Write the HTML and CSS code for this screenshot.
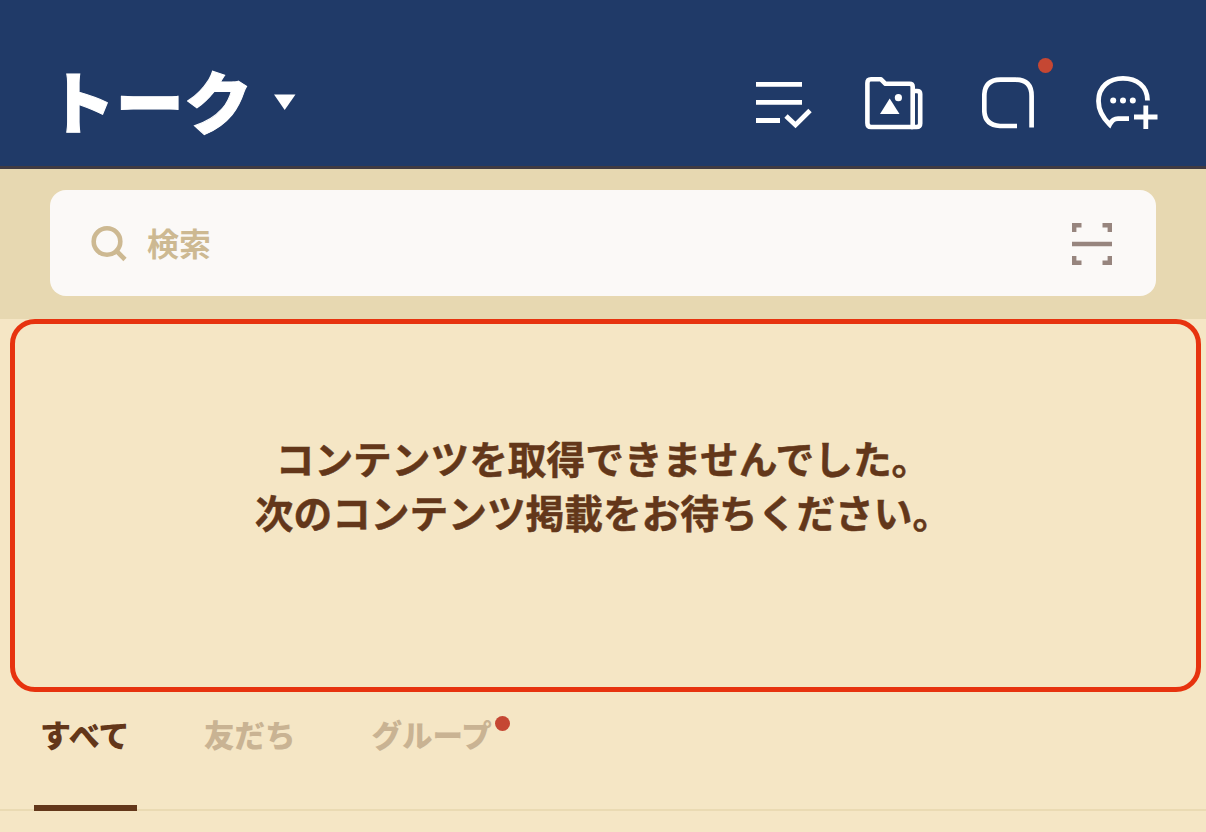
FILE: index.html
```
<!DOCTYPE html>
<html lang="ja">
<head>
  <meta charset="UTF-8" />
  <title>トーク</title>
  <link rel="stylesheet" href="styles.css">
</head>
<body>
  <header class="header">
    <h1 class="title">トーク</h1>
    <svg class="caret" width="22" height="16" viewBox="0 0 22 16"><path d="M0 0.5H21.5L10.700 16Z" fill="#fff"/></svg>

    <div class="header-icons">
      <svg width="56" height="56" viewBox="0 0 56 56" fill="none" stroke="#fff" stroke-width="4.8">
        <path d="M0 10.3H46M0 28.3H46M0 46.5H24"/>
        <path d="M30 42L39.500 51L54 36.5" stroke-width="4.8"/>
      </svg>
      <svg width="58" height="56" viewBox="0 0 58 56" fill="none" stroke="#fff" stroke-width="4.6">
        <path d="M6 5.300H16L20.500 9.800H44.500Q47.700 9.800 47.700 12.800V53H6Q2.400 53 2.400 49V9Q2.400 5.300 6 5.300Z" stroke-linejoin="round"/>
        <path d="M48 17H52Q55.200 17 55.200 20V49.500Q55.200 53 51.500 53H46"/>
        <path d="M15 40L24.700 24.500L34.500 40Z" fill="#fff" stroke="none"/>
        <circle cx="33.400" cy="23.700" r="3.600" fill="#fff" stroke="none"/>
      </svg>
      <div class="icon-badge">
        <svg width="52" height="56" viewBox="0 0 52 56" fill="none" stroke="#fff" stroke-width="4.7">
          <path d="M35 52H18Q2.300 51 2.300 36V22Q2.300 5.700 18.500 5.700H33.500Q49.600 5.700 49.600 22V53.500"/>
        </svg>
        <span class="dot dot-header"></span>
      </div>
      <svg width="62" height="56" viewBox="0 0 62 56" fill="none" stroke="#fff" stroke-width="4.8">
        <path d="M51.500 26.500C51.500 12 40.500 4.300 27 4.300C13 4.300 2.500 13 2.500 27C2.500 36.500 7 44 13.700 50.500C16 46 18 44.700 22 44.700H33"/>
        <path d="M38 43H61.500M49.800 31.500V55"/>
        <g fill="#fff" stroke="none"><circle cx="17.200" cy="26.500" r="3"/><circle cx="27" cy="26.500" r="3"/><circle cx="36.800" cy="26.500" r="3"/></g>
      </svg>
    </div>
  </header>

  <div class="search">
    <div class="search-box">
      <svg width="38" height="38" viewBox="0 0 38 38" fill="none" stroke="#cdb992" stroke-width="4.600">
        <circle cx="16" cy="17.500" r="13.300"/>
        <path d="M25.500 27L34 35.500"/>
      </svg>
      <span class="search-text">検索</span>
      <svg class="scan" width="40" height="46" viewBox="0 0 40 46" fill="none" stroke="#97857e" stroke-width="4.400">
        <path d="M2.200 12V5.200H9.500M30.500 5.200H37.800V12M2.200 36V42.800H9.500M30.500 42.800H37.800V36M0 24H40"/>
      </svg>
    </div>
  </div>

  <div class="notice">
    <p>コンテンツを取得できませんでした。<br>次のコンテンツ掲載をお待ちください。</p>
  </div>

  <nav class="tabs">
    <div class="tab tab-active">すべて</div>
    <div class="tab">友だち</div>
    <div class="tab">グループ<span class="dot dot-tab"></span></div>
  </nav>
</body>
</html>
```
FILE: styles.css
```
* {
  box-sizing: border-box;
}

body {
  margin: 0;
  height: 832px;
  overflow: hidden;
  background: #f5e6c5;
  color: #63371a;
  font-family: "Noto Sans CJK JP", sans-serif;
}

svg {
  display: block;
  flex-shrink: 0;
}

.header {
  display: flex;
  align-items: center;
  height: 169px;
  padding: 38px 48px 0 47px;
  background: #203a68;
  border-bottom: 3px solid #413b42;
  color: #fff;
}

.title {
  margin: 0;
  width: 227px;
  padding-bottom: 4px;
  font-size: 68.5px;
  font-weight: 900;
  line-height: 80px;
  white-space: nowrap;
  -webkit-text-stroke: 1px #fff;
}

.header-icons {
  display: flex;
  align-items: center;
  margin-left: auto;
}

.header-icons > :nth-child(1) {
  margin-right: 53px;
}

.header-icons > :nth-child(2) {
  margin-right: 59px;
}

.header-icons > :nth-child(3) {
  margin-right: 62px;
}

.icon-badge {
  position: relative;
}

.dot {
  width: 15px;
  height: 15px;
  border-radius: 50%;
  background: #c54733;
}

.dot-header {
  position: absolute;
  top: -16px;
  right: -19px;
}

.search {
  height: 150px;
  padding: 21px 50px 0;
  background: #e7d8b1;
}

.search-box {
  display: flex;
  align-items: center;
  height: 106px;
  padding: 0 44px 0 41px;
  border-radius: 16px;
  background: #fbf9f7;
}

.search-text {
  margin-left: 18px;
  padding-bottom: 3px;
  color: #cdb992;
  font-size: 32px;
  font-weight: 700;
  line-height: 40px;
}

.scan {
  margin-left: auto;
}

.notice {
  height: 373px;
  margin: 0 5px 0 10px;
  padding: 106px 5px 0 0;
  border: 5px solid #e7330f;
  border-radius: 25px;
  text-align: center;
}

.notice p {
  margin: 0;
  font-size: 38.7px;
  font-weight: 700;
  line-height: 54px;
  -webkit-text-stroke: 0.5px #63371a;
}

.tabs {
  display: flex;
  gap: 60px;
  height: 119px;
  padding-left: 34px;
  border-bottom: 2px solid #eadab3;
}

.tab {
  display: flex;
  height: 119px;
  padding: 20px 7px 0;
  color: #c9b393;
  font-size: 30.5px;
  font-weight: 900;
  line-height: 44px;
}

.tab-active {
  width: 103px;
  padding: 20px 0 0 6px;
  border-bottom: 6px solid #63371a;
  color: #63371a;
  font-size: 31px;
}

.tab:last-child {
  padding-left: 9px;
}

.dot-tab {
  margin: 4px 0 0 3px;
}
```
